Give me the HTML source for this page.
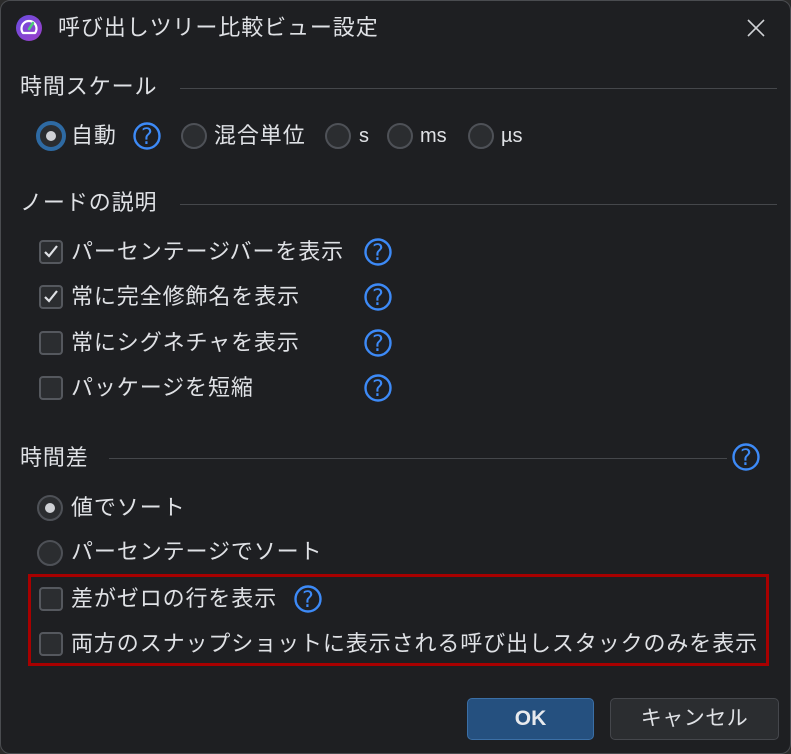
<!DOCTYPE html>
<html><head><meta charset="utf-8"><style>
*{margin:0;padding:0;box-sizing:border-box}
body{width:791px;height:754px;background:#2b2b2b;overflow:hidden;font-family:"Liberation Sans","Noto Sans CJK JP",sans-serif;color:#dfe1e5}
#w{position:absolute;left:0;top:0;width:791px;height:754px;background:#1e1f22;border:1px solid #4a4c50;border-radius:10px;overflow:hidden}
.t{position:absolute;font-size:22px;letter-spacing:0.9px;line-height:30px;height:30px;white-space:nowrap}
.ln{position:absolute;height:1px;background:#45474b}
.rb{position:absolute;width:26px;height:26px;border-radius:50%;background:#2b2d30;border:2px solid #4e5157}
.rb.sel::after{content:"";position:absolute;left:6px;top:6px;width:10px;height:10px;border-radius:50%;background:#cfd1d5}
.rb.foc{border:4px solid #2e6aa3;background:#2b2d30}
.rb.foc::after{left:6px;top:6px}
.cb{position:absolute;width:24px;height:24px;border-radius:4px;background:#2b2d30;border:2px solid #55585e}
.cb svg{position:absolute;left:2px;top:2px}
.h{position:absolute;width:30px;height:30px}
.btn{position:absolute;height:42px;border-radius:5px;font-size:21px;line-height:40px;text-align:center}
</style></head><body><div id="w">
<svg style="position:absolute;left:14px;top:13px" width="28" height="28" viewBox="0 0 28 28"><defs><linearGradient id="g" x1="0" y1="0" x2="1" y2="1"><stop offset="0" stop-color="#6a4de0"/><stop offset="1" stop-color="#9b3fc8"/></linearGradient></defs><circle cx="14" cy="14" r="13" fill="url(#g)"/><path d="M8 19 A7.5 7.5 0 1 1 20 19 Z" fill="none" stroke="#fff" stroke-width="2.2" stroke-linejoin="round"/><path d="M14 15 L18 9" stroke="#4ed07a" stroke-width="2.5" stroke-linecap="round"/></svg>
<div class="t" style="left:57px;top:12px">呼び出しツリー比較ビュー設定</div>
<svg style="position:absolute;left:745px;top:17px" width="20" height="20"><path d="M2 2L18 18M18 2L2 18" stroke="#cfd1d5" stroke-width="1.6"/></svg>

<div class="t" style="left:19px;top:71px">時間スケール</div>
<div class="ln" style="left:179px;top:87px;width:597px"></div>
<div class="rb sel foc" style="left:35px;top:120px;width:30px;height:30px"></div>
<div class="t" style="left:70px;top:120px">自動</div>
<svg class="h" style="left:131px;top:120px" viewBox="0 0 30 30"><circle cx="15" cy="15" r="12.5" fill="none" stroke="#3d8af7" stroke-width="2.4"/><text x="15" y="23" font-size="22" fill="#3d8af7" text-anchor="middle" font-family="DejaVu Sans">?</text></svg>
<div class="rb" style="left:180px;top:122px"></div>
<div class="t" style="left:213px;top:120px">混合単位</div>
<div class="rb" style="left:324px;top:122px"></div>
<div class="t" style="left:358px;top:120px;font-size:20px">s</div>
<div class="rb" style="left:386px;top:122px"></div>
<div class="t" style="left:419px;top:120px;letter-spacing:0;font-size:20px">ms</div>
<div class="rb" style="left:467px;top:122px"></div>
<div class="t" style="left:500px;top:120px;letter-spacing:0;font-size:20px">µs</div>

<div class="t" style="left:19px;top:187px">ノードの説明</div>
<div class="ln" style="left:179px;top:203px;width:597px"></div>

<div class="cb" style="left:38px;top:239px"><svg width="16" height="16"><path d="M2 8l4 4 8-10" fill="none" stroke="#dfe1e5" stroke-width="2.2"/></svg></div>
<div class="t" style="left:70px;top:236px">パーセンテージバーを表示</div>
<svg class="h" style="left:362px;top:236px" viewBox="0 0 30 30"><circle cx="15" cy="15" r="12.5" fill="none" stroke="#3d8af7" stroke-width="2.4"/><text x="15" y="23" font-size="22" fill="#3d8af7" text-anchor="middle" font-family="DejaVu Sans">?</text></svg>
<div class="cb" style="left:38px;top:284px"><svg width="16" height="16"><path d="M2 8l4 4 8-10" fill="none" stroke="#dfe1e5" stroke-width="2.2"/></svg></div>
<div class="t" style="left:70px;top:281px">常に完全修飾名を表示</div>
<svg class="h" style="left:362px;top:281px" viewBox="0 0 30 30"><circle cx="15" cy="15" r="12.5" fill="none" stroke="#3d8af7" stroke-width="2.4"/><text x="15" y="23" font-size="22" fill="#3d8af7" text-anchor="middle" font-family="DejaVu Sans">?</text></svg>
<div class="cb" style="left:38px;top:330px"></div>
<div class="t" style="left:70px;top:327px">常にシグネチャを表示</div>
<svg class="h" style="left:362px;top:327px" viewBox="0 0 30 30"><circle cx="15" cy="15" r="12.5" fill="none" stroke="#3d8af7" stroke-width="2.4"/><text x="15" y="23" font-size="22" fill="#3d8af7" text-anchor="middle" font-family="DejaVu Sans">?</text></svg>
<div class="cb" style="left:38px;top:375px"></div>
<div class="t" style="left:70px;top:372px">パッケージを短縮</div>
<svg class="h" style="left:362px;top:372px" viewBox="0 0 30 30"><circle cx="15" cy="15" r="12.5" fill="none" stroke="#3d8af7" stroke-width="2.4"/><text x="15" y="23" font-size="22" fill="#3d8af7" text-anchor="middle" font-family="DejaVu Sans">?</text></svg>

<div class="t" style="left:19px;top:442px">時間差</div>
<div class="ln" style="left:108px;top:457px;width:618px"></div>
<svg class="h" style="left:730px;top:441px" viewBox="0 0 30 30"><circle cx="15" cy="15" r="12.5" fill="none" stroke="#3d8af7" stroke-width="2.4"/><text x="15" y="23" font-size="22" fill="#3d8af7" text-anchor="middle" font-family="DejaVu Sans">?</text></svg>

<div class="rb sel" style="left:36px;top:494px"></div>
<div class="t" style="left:70px;top:492px">値でソート</div>
<div class="rb" style="left:36px;top:539px"></div>
<div class="t" style="left:70px;top:536px">パーセンテージでソート</div>

<div style="position:absolute;left:27px;top:573px;width:741px;height:92px;border:3px solid #a80000"></div>
<div class="cb" style="left:38px;top:586px"></div>
<div class="t" style="left:70px;top:583px">差がゼロの行を表示</div>
<svg class="h" style="left:292px;top:583px" viewBox="0 0 30 30"><circle cx="15" cy="15" r="12.5" fill="none" stroke="#3d8af7" stroke-width="2.4"/><text x="15" y="23" font-size="22" fill="#3d8af7" text-anchor="middle" font-family="DejaVu Sans">?</text></svg>
<div class="cb" style="left:38px;top:631px"></div>
<div class="t" style="left:70px;top:628px">両方のスナップショットに表示される呼び出しスタックのみを表示</div>

<div class="btn" style="left:466px;top:697px;width:127px;background:#25507f;border:1px solid #3b6fa6;font-weight:bold;color:#e8eaee">OK</div>
<div class="btn" style="left:609px;top:697px;width:169px;background:#2b2d30;border:1px solid #45474c;letter-spacing:0.5px">キャンセル</div>
</div></body></html>
